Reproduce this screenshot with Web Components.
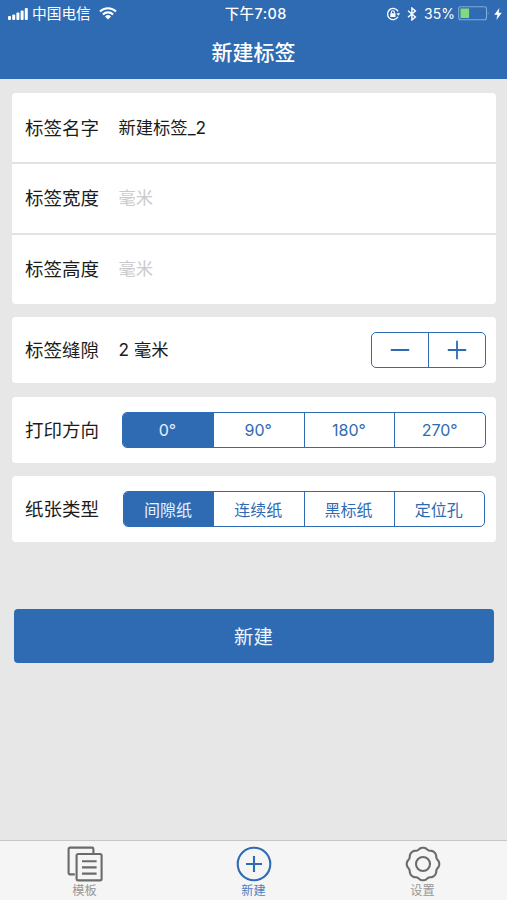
<!DOCTYPE html>
<html lang="zh-CN">
<head>
<meta charset="utf-8">
<title>新建标签</title>
<style>
    html, body {
        margin: 0;
        height: 100%;
    }
    body {
        --blue: #2f6bb3;
        --page: #e7e7e7;
        background: var(--page);
        font-family: Inter, "Noto Sans CJK SC", sans-serif;
        color: #1c1c1c;
        overflow: hidden;
    }
</style>
</head>
<body>
<label-app>
    <status-bar slot="top" carrier="中国电信" time="下午7:08" battery="35"></status-bar>
    <nav-title slot="top">新建标签</nav-title>

    <form-card>
        <form-row label="标签名字" tall>新建标签_2</form-row>
        <form-row label="标签宽度" placeholder="毫米" tall></form-row>
        <form-row label="标签高度" placeholder="毫米" tall></form-row>
    </form-card>
    <form-card>
        <form-row label="标签缝隙">2 毫米<step-control slot="control"></step-control></form-row>
    </form-card>
    <form-card>
        <form-row label="打印方向"><segment-control slot="control" options="0°,90°,180°,270°" selected="0"></segment-control></form-row>
    </form-card>
    <form-card>
        <form-row label="纸张类型"><segment-control slot="control" class="paper" options="间隙纸,连续纸,黑标纸,定位孔" selected="0"></segment-control></form-row>
    </form-card>
    <main-button>新建</main-button>

    <tab-bar slot="bottom">
        <tab-item icon="template">模板</tab-item>
        <tab-item icon="add" active>新建</tab-item>
        <tab-item icon="gear">设置</tab-item>
    </tab-bar>
</label-app>

<script>
class BaseElement extends HTMLElement {
    constructor() {
        super();
        this.attachShadow({ mode: "open" });
    }

    connectedCallback() {
        const template = document.createElement("template");
        template.innerHTML = this.getStyle() + this.getTemplate();
        this.shadowRoot.innerHTML = "";
        this.shadowRoot.appendChild(template.content.cloneNode(true));
    }
}

class LabelApp extends BaseElement {
    getTemplate() {
        return `
            <header><slot name="top"></slot></header>
            <main><slot></slot></main>
            <slot name="bottom"></slot>
        `;
    }
    getStyle() {
        return `<style>
            :host { display: flex; flex-direction: column; height: 900px; }
            header { height: 79px; background: var(--blue); color: #fff; }
            main {
                flex: 1;
                display: flex;
                flex-direction: column;
                gap: 13.4px;
                padding: 14px 11px 0 12px;
            }
        </style>`;
    }
}

class StatusBar extends BaseElement {
    getTemplate() {
        const level = this.getAttribute("battery");
        return `
            <div class="side">
                <svg width="20" height="12" viewBox="0 0 20 12" fill="#fff">
                    <rect x="0" y="8" width="3" height="4" rx="1"/>
                    <rect x="4.2" y="6.4" width="3" height="5.6" rx="1"/>
                    <rect x="8.4" y="4.6" width="3" height="7.4" rx="1"/>
                    <rect x="12.6" y="2.4" width="3" height="9.6" rx="1"/>
                    <rect x="16.8" y="0" width="3" height="12" rx="1"/>
                </svg>
                <span class="carrier">${this.getAttribute("carrier")}</span>
                <svg class="wifi" width="18" height="13" viewBox="0 0 18 13" fill="none" stroke="#fff" stroke-width="2.1">
                    <path d="M1 4.6 A11.4 11.4 0 0 1 17 4.6"/>
                    <path d="M3.9 7.5 A7.3 7.3 0 0 1 14.1 7.5"/>
                    <path d="M9 12.4 L6 9.5 A4.3 4.3 0 0 1 12 9.5 Z" fill="#fff" stroke="none"/>
                </svg>
            </div>
            <span class="time">${this.getAttribute("time")}</span>
            <div class="side right">
                <svg width="15" height="14" viewBox="0 0 15 14" fill="none" stroke="#fff" stroke-width="1.3">
                    <path d="M12.1 4.4 A5.6 5.6 0 1 0 12 9.8"/>
                    <path d="M10.4 6.2 H14.2 L12.3 8.8 Z" fill="#fff" stroke="none"/>
                    <rect x="4.3" y="6.2" width="5.2" height="3.8" rx=".5" fill="#fff" stroke="none"/>
                    <path d="M5.4 6.4 V5.2 A1.5 1.5 0 0 1 8.4 5.2 V6.4" stroke-width="1.1"/>
                </svg>
                <svg class="bt" width="10" height="14" viewBox="0 0 10 14" fill="none" stroke="#fff" stroke-width="1.4">
                    <path d="M1 3.8 L8.4 10 L4.9 13 V1 L8.4 4 L1 10.2"/>
                </svg>
                <span class="level">${level}%</span>
                <svg class="battery" width="32" height="15" viewBox="0 0 32 15">
                    <rect x=".7" y=".7" width="27.8" height="13" rx="2" fill="none" stroke="#82a9d6" stroke-width="1.1"/>
                    <rect x="2.5" y="2.5" width="8.6" height="9.5" fill="#7fdb7c"/>
                    <path d="M29.8 5 Q31.4 7.2 29.8 9.4 Z" fill="#82a9d6"/>
                </svg>
                <svg class="bolt" width="8" height="12" viewBox="0 0 8 12" fill="#fff">
                    <path d="M5.4 0 L.2 6.8 H3.4 L2.4 12 L7.8 4.8 H4.6 Z"/>
                </svg>
            </div>
        `;
    }
    getStyle() {
        return `<style>
            :host {
                display: grid;
                grid-template-columns: 1fr auto 1fr;
                align-items: center;
                height: 27px;
                padding: 0 5.5px 0 8px;
                font-size: 14.4px;
                line-height: 27px;
            }
            svg { flex: none; }
            .side { display: flex; align-items: center; height: 27px; }
            .right { justify-content: flex-end; }
            .carrier { margin-left: 4px; padding-top: 2px; font-size: 14.7px; }
            .wifi { margin-left: 8px; }
            .time { padding-left: 2px; font-size: 14.4px; font-weight: 500; letter-spacing: .5px; }
            .bt { margin-left: 6px; }
            .level { margin-left: 7px; font-size: 14px; }
            .battery { margin-left: 3px; }
            .bolt { margin-left: 3.5px; }
        </style>`;
    }
}

class NavTitle extends BaseElement {
    getTemplate() {
        return `<slot></slot>`;
    }
    getStyle() {
        return `<style>
            :host {
                display: block;
                height: 52px;
                line-height: 52px;
                text-align: center;
                font-size: 21px;
                font-weight: 500;
            }
        </style>`;
    }
}

class FormCard extends BaseElement {
    getTemplate() {
        return `<slot></slot>`;
    }
    getStyle() {
        return `<style>
            :host {
                display: flex;
                flex-direction: column;
                gap: 1.5px;
                background: linear-gradient(#e2e2e2, #e2e2e2) center / 100% calc(100% - 20px) no-repeat;
                border-radius: 4px;
                overflow: hidden;
            }
        </style>`;
    }
}

class FormRow extends BaseElement {
    getTemplate() {
        const placeholder = this.getAttribute("placeholder");
        return `
            <span class="label">${this.getAttribute("label")}</span>
            <span class="value">${placeholder ? `<span class="placeholder">${placeholder}</span>` : ""}<slot></slot></span>
            <slot name="control"></slot>
        `;
    }
    getStyle() {
        return `<style>
            :host {
                display: flex;
                align-items: center;
                height: 66px;
                padding: 0 10px 0 13px;
                background: #fff;
            }
            :host([tall]) { height: 69.3px; }
            .label { width: 93.5px; font-size: 18.5px; line-height: 28px; white-space: nowrap; }
            .value { flex: 1; font-size: 17.3px; line-height: 28px; white-space: nowrap; }
            .placeholder { color: #cbcbcd; }
        </style>`;
    }
}

class StepControl extends BaseElement {
    getTemplate() {
        return `
            <button aria-label="减少"><svg width="20" height="20" viewBox="0 0 20 20"><path d="M.8 10 H19.2"/></svg></button>
            <button aria-label="增加"><svg width="20" height="20" viewBox="0 0 20 20"><path d="M.8 10 H19.2 M10 .8 V19.2"/></svg></button>
        `;
    }
    getStyle() {
        return `<style>
            :host {
                display: flex;
                box-sizing: border-box;
                width: 115px;
                height: 36px;
                border: 1.4px solid var(--blue);
                border-radius: 5px;
            }
            button {
                flex: 1;
                display: grid;
                place-items: center;
                padding: 0;
                border: 0;
                background: none;
            }
            button + button { border-left: 1.4px solid var(--blue); }
            path { fill: none; stroke: var(--blue); stroke-width: 1.8; }
        </style>`;
    }
}

class SegmentControl extends BaseElement {
    getTemplate() {
        const selected = Number(this.getAttribute("selected"));
        return this.getAttribute("options").split(",")
            .map((text, i) => `<button class="${i === selected ? "on" : ""}">${text}</button>`)
            .join("");
    }
    getStyle() {
        return `<style>
            :host {
                display: flex;
                box-sizing: border-box;
                width: 364px;
                height: 36px;
                border: 1.4px solid var(--blue);
                border-radius: 5px;
                overflow: hidden;
            }
            :host(.paper) { width: 362px; margin-right: 1px; }
            button {
                flex: 1;
                padding: 0 1px 0 0;
                border: 0;
                background: none;
                color: var(--blue);
                font: inherit;
                font-size: 16px;
            }
            button + button { border-left: 1.4px solid var(--blue); }
            .on { background: var(--blue); color: #e6f1ff; }
        </style>`;
    }
}

class MainButton extends BaseElement {
    getTemplate() {
        return `<button><slot></slot></button>`;
    }
    getStyle() {
        return `<style>
            :host { display: block; margin: 53.2px 2px 0; }
            button {
                width: 100%;
                height: 54px;
                padding: 0 1px 0 0;
                border: 0;
                border-radius: 4px;
                background: var(--blue);
                color: #edf6ff;
                font: inherit;
                font-size: 19.4px;
            }
        </style>`;
    }
}

class TabBar extends BaseElement {
    getTemplate() {
        return `<slot></slot>`;
    }
    getStyle() {
        return `<style>
            :host {
                display: grid;
                grid-template-columns: repeat(3, 1fr);
                box-sizing: border-box;
                height: 60px;
                border-top: 1px solid #c6c6c6;
                background: #f5f5f6;
            }
        </style>`;
    }
}

// Wavy closed outline, the radius swings by depth around r
function gearPath(cx, cy, r, depth, lobes) {
    const points = [];
    for (let deg = 0; deg < 360; deg += 3) {
        const a = deg * Math.PI / 180;
        const wave = 1 - 2 * Math.pow(Math.abs(Math.sin(a * lobes / 2)), 3);
        const k = r + depth * wave;
        points.push(`${(cx + k * Math.sin(a)).toFixed(2)} ${(cy - k * Math.cos(a)).toFixed(2)}`);
    }
    return "M" + points.join(" L") + "Z";
}

const ICONS = {
    template: `
        <path d="M7.8 28.4 H3 Q1.6 28.4 1.6 27 V3 Q1.6 1.6 3 1.6 H25 Q26.4 1.6 26.4 3 V7.2"/>
        <rect x="9.6" y="8" width="25" height="26.4" rx="1.6"/>
        <path d="M15 15.2 H29.6 M15 21.4 H29.6 M15 27.6 H29.6"/>
    `,
    add: `
        <circle cx="18" cy="18" r="16.3"/>
        <path d="M10 18 H26 M18 10 V26"/>
    `,
    gear: `
        <path d="${gearPath(18, 18, 15.5, 0.75, 8)}"/>
        <circle cx="18" cy="18" r="7"/>
    `
};

class TabItem extends BaseElement {
    getTemplate() {
        return `
            <svg width="36" height="36" viewBox="0 0 36 36">${ICONS[this.getAttribute("icon")]}</svg>
            <span><slot></slot></span>
        `;
    }
    getStyle() {
        return `<style>
            :host {
                display: flex;
                flex-direction: column;
                align-items: center;
                padding-top: 4.5px;
                color: #979797;
            }
            :host([active]) { color: #4e80bd; }
            svg { fill: none; stroke: #6b6b6b; stroke-width: 2.1; stroke-linejoin: round; }
            :host([active]) svg { stroke: var(--blue); }
            span { font-size: 12.2px; line-height: 18px; }
        </style>`;
    }
}

customElements.define("label-app", LabelApp);
customElements.define("status-bar", StatusBar);
customElements.define("nav-title", NavTitle);
customElements.define("form-card", FormCard);
customElements.define("form-row", FormRow);
customElements.define("step-control", StepControl);
customElements.define("segment-control", SegmentControl);
customElements.define("main-button", MainButton);
customElements.define("tab-bar", TabBar);
customElements.define("tab-item", TabItem);
</script>
</body>
</html>
